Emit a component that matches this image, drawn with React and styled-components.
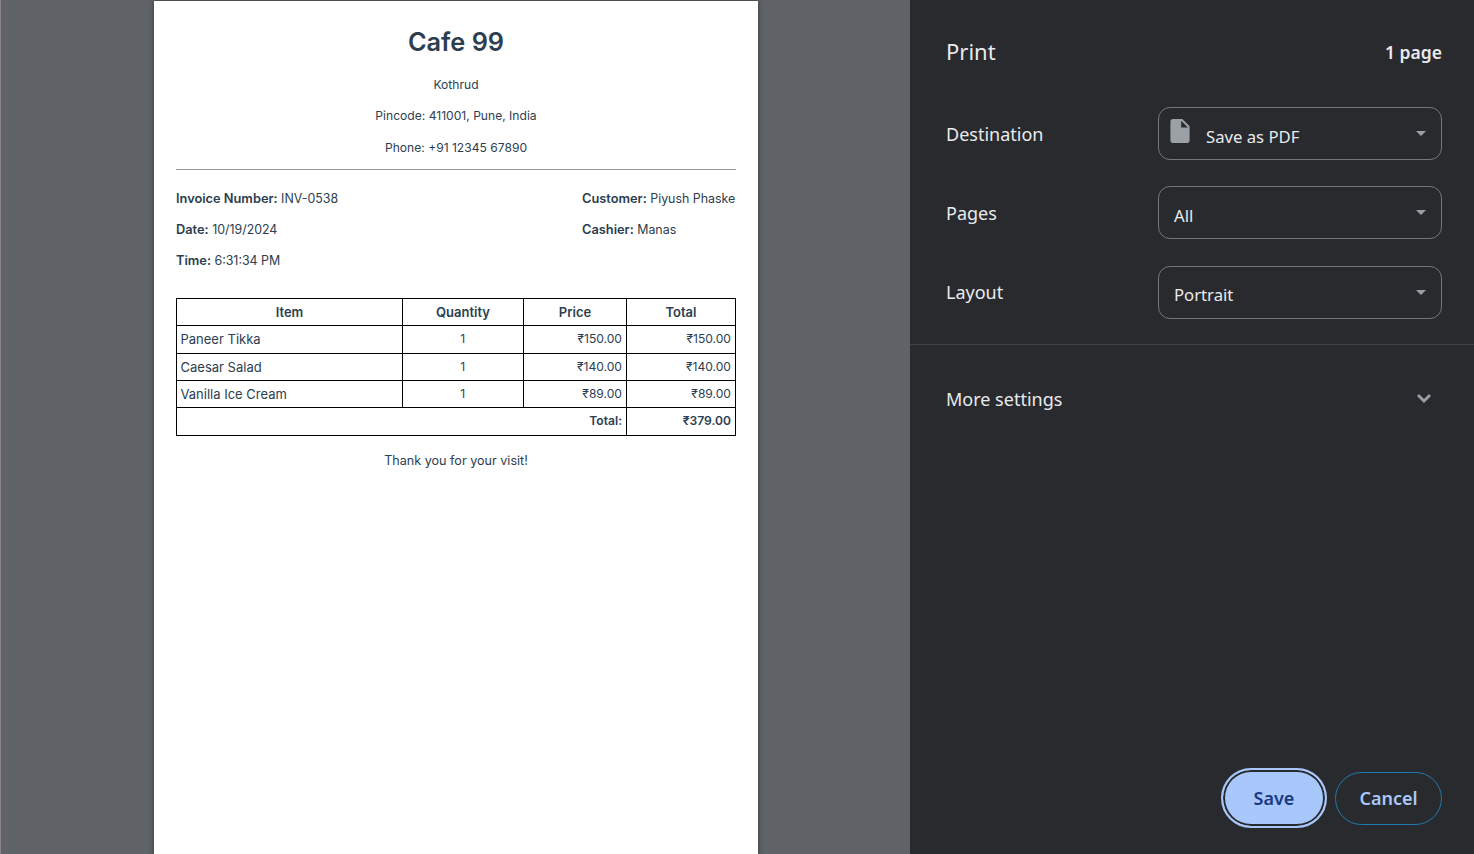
import React from "react";
import styled, { createGlobalStyle } from "styled-components";

const Global = createGlobalStyle`
  html, body { margin: 0; padding: 0; height: 100%; overflow: hidden; background: #5f6368; }
`;

const Shell = styled.div`
  display: flex;
  width: 1474px;
  height: 854px;
  overflow: hidden;
`;

const Preview = styled.main`
  width: 910px;
  flex: none;
  box-sizing: border-box;
  background: #5f6368;
  border-left: 1px solid #8d8485;
  padding: 1px 0 0 153px;
  overflow: hidden;
`;

const Sheet = styled.div`
  width: 604px;
  height: 900px;
  box-sizing: border-box;
  background: #fff;
  box-shadow: 0 0 5px rgba(0, 0, 0, 0.45);
  padding: 0 22px;
  color: #2c3e50;
  font-family: "Inter", "Liberation Sans", sans-serif;
  font-size: 12.4px;
`;

const Title = styled.h1`
  margin: 0;
  padding-top: 25px;
  height: 65px;
  box-sizing: border-box;
  text-align: center;
  font-size: 25.3px;
  line-height: 32px;
  font-weight: 600;
  color: #2c3e50;
`;

const HeadLine = styled.p`
  margin: 0;
  height: 31.3px;
  line-height: 37px;
  text-align: center;
  font-size: 12.1px;
`;

const Rule = styled.hr`
  margin: 9px 0 0;
  border: 0;
  height: 1px;
  background: #999;
`;

const Meta = styled.div`
  display: flex;
  justify-content: space-between;
  padding-top: 13px;
`;

const MetaColumn = styled.div`
  display: flex;
  flex-direction: column;
  min-width: 154px;
`;

const MetaLine = styled.div`
  height: 31px;
  line-height: 31px;
  white-space: nowrap;
  strong { font-weight: 600; font-size: 12.8px; }
`;

const Invoice = styled.table`
  width: 559px;
  margin-top: 22px;
  border-collapse: collapse;
  table-layout: fixed;
  color: #2c3e50;
`;

const Head = styled.th`
  height: 26px;
  padding: 0 4px;
  border: 1px solid #000;
  font-size: 13px;
  font-weight: 600;
  text-align: center;
  line-height: 26px;
`;

const Cell = styled.td`
  height: ${(p) => (p.$tall ? 27 : 26)}px;
  padding: 0 4px 0 3.5px;
  border: 1px solid #000;
  line-height: 26px;
  font-size: ${(p) => (p.$align ? 12.1 : 13)}px;
  text-align: ${(p) => p.$align || "left"};
  font-weight: ${(p) => (p.$bold ? 600 : 400)};
  white-space: nowrap;
`;

const Thanks = styled.p`
  margin: 0;
  padding-top: 15px;
  line-height: 19px;
  text-align: center;
  font-size: 12.6px;
`;

const Sidebar = styled.aside`
  flex: 1;
  display: flex;
  flex-direction: column;
  background: #292a2d;
  color: #e8eaed;
  font-family: "Noto Sans", "Open Sans", sans-serif;
`;

const SideHeader = styled.header`
  display: flex;
  justify-content: space-between;
  align-items: center;
  height: 107px;
  padding: 0 32px 6px 36px;
  box-sizing: border-box;
`;

const SideTitle = styled.h2`
  margin: 0;
  font-size: 22px;
  font-weight: 400;
`;

const PageCount = styled.span`
  font-size: 17.5px;
  font-weight: 600;
  margin-top: 2px;
`;

const Settings = styled.section`
  display: flex;
  flex-direction: column;
  gap: 26.4px;
  padding: 0 32px 25px 36px;
  border-bottom: 1px solid #3f4043;
`;

const Row = styled.div`
  display: flex;
  justify-content: space-between;
  align-items: center;
`;

const Label = styled.span`
  font-size: 18px;
  line-height: 26px;
`;

const Select = styled.div`
  position: relative;
  display: flex;
  align-items: center;
  gap: 16px;
  width: 284px;
  height: 53px;
  box-sizing: border-box;
  padding: 5px 40px 0 15px;
  border: 1px solid #75777a;
  border-radius: 12px;
  font-size: 16.7px;
`;

const Caret = styled.span`
  position: absolute;
  right: 15px;
  top: 23px;
  width: 0;
  height: 0;
  border-left: 5px solid transparent;
  border-right: 5px solid transparent;
  border-top: 5px solid #9aa0a6;
`;

const FileIcon = styled.svg`
  flex: none;
  width: 20px;
  height: 24px;
  margin: -10px 0 0 -4px;
  color: #9aa0a6;
`;

const More = styled.div`
  display: flex;
  justify-content: space-between;
  align-items: center;
  padding: 41px 32px 0 36px;
  font-size: 18px;
  line-height: 26px;
`;

const Chevron = styled.svg`
  width: 16px;
  height: 10px;
  margin: -2px 10px 0 0;
  color: #9aa0a6;
`;

const Footer = styled.footer`
  margin-top: auto;
  display: flex;
  justify-content: flex-end;
  align-items: center;
  gap: 8px;
  padding: 0 32px 26px 0;
`;

const SaveButton = styled.button`
  width: 106px;
  height: 60px;
  box-sizing: border-box;
  border: 2px solid #a8c7fa;
  border-radius: 30px;
  padding: 0;
  background: #a8c7fa;
  box-shadow: inset 0 0 0 2px #292a2d;
  color: #1a3a85;
  font: 600 18px "Noto Sans", sans-serif;
`;

const CancelButton = styled.button`
  width: 107px;
  height: 53px;
  box-sizing: border-box;
  border: 1px solid #1f7ab0;
  border-radius: 27px;
  padding: 0;
  background: transparent;
  color: #a8c7fa;
  font: 600 18px "Noto Sans", sans-serif;
`;

const items = [
  ["Paneer Tikka", "1", "₹150.00", "₹150.00"],
  ["Caesar Salad", "1", "₹140.00", "₹140.00"],
  ["Vanilla Ice Cream", "1", "₹89.00", "₹89.00"],
];

export default function App() {
  return (
    <Shell>
      <Global />
      <Preview>
        <Sheet>
          <Title>Cafe 99</Title>
          <HeadLine>Kothrud</HeadLine>
          <HeadLine>Pincode: 411001, Pune, India</HeadLine>
          <HeadLine>Phone: +91 12345 67890</HeadLine>
          <Rule />
          <Meta>
            <MetaColumn>
              <MetaLine><strong>Invoice Number:</strong> INV-0538</MetaLine>
              <MetaLine><strong>Date:</strong> 10/19/2024</MetaLine>
              <MetaLine><strong>Time:</strong> 6:31:34 PM</MetaLine>
            </MetaColumn>
            <MetaColumn>
              <MetaLine><strong>Customer:</strong> Piyush Phaske</MetaLine>
              <MetaLine><strong>Cashier:</strong> Manas</MetaLine>
            </MetaColumn>
          </Meta>
          <Invoice>
            <colgroup>
              <col style={{ width: 226 }} />
              <col style={{ width: 121 }} />
              <col style={{ width: 103 }} />
              <col style={{ width: 109 }} />
            </colgroup>
            <thead>
              <tr>
                <Head>Item</Head>
                <Head>Quantity</Head>
                <Head>Price</Head>
                <Head>Total</Head>
              </tr>
            </thead>
            <tbody>
              {items.map(([name, qty, price, total], i) => (
                <tr key={name}>
                  <Cell $tall={i === 0}>{name}</Cell>
                  <Cell $tall={i === 0} $align="center">{qty}</Cell>
                  <Cell $tall={i === 0} $align="right">{price}</Cell>
                  <Cell $tall={i === 0} $align="right">{total}</Cell>
                </tr>
              ))}
              <tr>
                <Cell $tall colSpan={3} $align="right" $bold>Total:</Cell>
                <Cell $tall $align="right" $bold>₹379.00</Cell>
              </tr>
            </tbody>
          </Invoice>
          <Thanks>Thank you for your visit!</Thanks>
        </Sheet>
      </Preview>
      <Sidebar>
        <SideHeader>
          <SideTitle>Print</SideTitle>
          <PageCount>1 page</PageCount>
        </SideHeader>
        <Settings>
          <Row>
            <Label>Destination</Label>
            <Select>
              <FileIcon viewBox="4 2 16 20" aria-hidden="true">
                <path
                  fill="currentColor"
                  fillRule="evenodd"
                  d="M6 2c-1.1 0-2 .9-2 2v16c0 1.1.9 2 2 2h12c1.1 0 2-.9 2-2V8l-6-6H6zm7 7V3.5L18.5 9H13z"
                />
              </FileIcon>
              Save as PDF
              <Caret />
            </Select>
          </Row>
          <Row>
            <Label>Pages</Label>
            <Select>All<Caret /></Select>
          </Row>
          <Row>
            <Label>Layout</Label>
            <Select>Portrait<Caret /></Select>
          </Row>
        </Settings>
        <More>
          More settings
          <Chevron viewBox="0 0 16 10" fill="none" aria-hidden="true">
            <path d="M2 2l6 6 6-6" stroke="currentColor" strokeWidth="2.8" />
          </Chevron>
        </More>
        <Footer>
          <SaveButton>Save</SaveButton>
          <CancelButton>Cancel</CancelButton>
        </Footer>
      </Sidebar>
    </Shell>
  );
}
